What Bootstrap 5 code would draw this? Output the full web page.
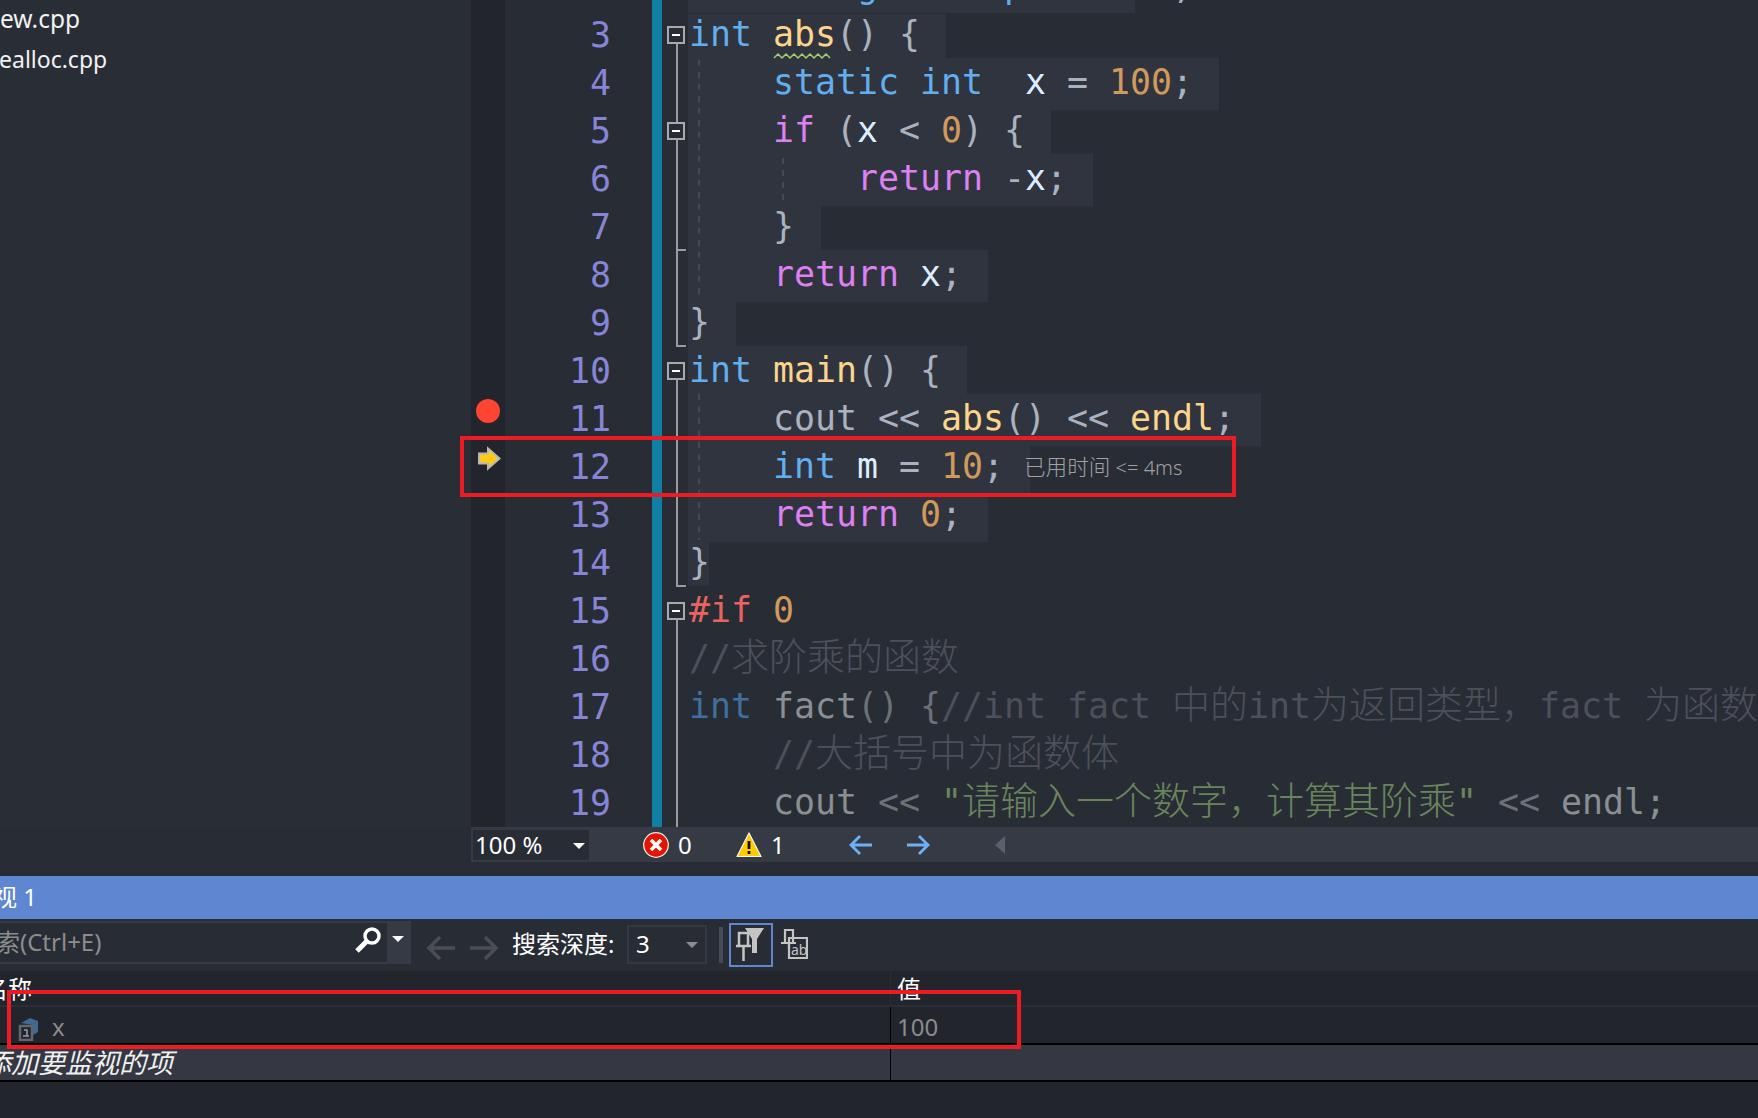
<!DOCTYPE html>
<html lang="zh">
<head>
<meta charset="utf-8">
<title>Watch</title>
<link href="https://cdn.jsdelivr.net/npm/bootstrap@5.3.0/dist/css/bootstrap.min.css" rel="stylesheet">
<style>
html,body{margin:0;height:1118px;overflow:hidden;background:#282c35;}
body{font-family:"Noto Sans","Noto Sans CJK SC",sans-serif;font-size:24px;color:#fff;}
.page-wrap{width:1758px;height:1118px;position:relative;}
.top-zone{height:827px;flex:none;}
.side-pane{width:471px;background:#292d36;line-height:41px;font-size:23px;color:#f2f2f2;}
.side-file{margin-left:-1px;margin-top:-2px;height:41px;}
.side-first{font-size:24.5px;margin-left:0;}
.editor-pane{width:1287px;min-width:0;}
.rows{margin-top:-37px;height:864px;flex:none;}
.ed-row{height:48px;flex:none;}
.gut{width:34px;background:#22252b;height:48px;flex:none;}
.num{width:147px;height:48px;flex:none;padding-right:41px;text-align:right;color:#8884d8;font:34.88px/48px "DejaVu Sans Mono",monospace;}
.chg{width:10px;height:48px;flex:none;background:#0f80a3;}
.fold-col{width:26px;height:48px;flex:none;}
.code{height:48px;padding-left:1px;white-space:pre;font:34.88px/46px "DejaVu Sans Mono","Noto Sans CJK SC",monospace;color:#dcedff;flex:none;}
.band{background:#30343e;}
.tall{margin-top:-1px;height:52px;line-height:48px;}
.short{margin-top:3px;height:44px;line-height:40px;}
.mid{margin-top:-1px;height:48px;line-height:48px;}
.b2{width:447px;height:50px;line-height:46px;}.b3{width:258px}.b4{width:531px}.b5{width:363px}.b6{width:405px}.b7{width:133px}.b8{width:300px}.b9{width:48px}.b10{width:279px}.b11{width:573px}.b12{width:342px;height:49px}.b13{width:300px;margin-top:4px;height:47px;line-height:38px}.b14{width:21px}
.zh{font:38px/1 "Noto Sans CJK SC",sans-serif;font-weight:300;}
.kw{color:#61afef}.fn{color:#fdd48b}.pk{color:#dd80f2}.nu{color:#d19a5c}.pu{color:#abb2bf}.ih{color:#e8655f}
.ckw{color:#3f6f9f}.cfn{color:#8b8e93}.cpu{color:#6c7079}.cmt{color:#4c505a}.cstr{color:#69855c}
.inlay{font:300 20px/1 "Noto Sans","Noto Sans CJK SC",sans-serif;color:#a2a2a2;margin-left:-6px;position:relative;}
.inlay-zh{font-size:21.6px}
.overlay-svg{position:absolute;left:0;top:0;pointer-events:none;}
.bp-dot{width:24px;height:24px;border-radius:50%;background:#ff4433;margin:4px 0 0 5px;}
.status-bar{height:35px;margin-left:471px;background:#353a45;font-size:24px;line-height:1;flex:none;}
.gap-strip{height:14px;flex:none;}
.zoom-box{width:116px;height:30px;margin-left:2px;background:#282c35;padding-left:2px;line-height:30px;}
.caret-d{width:0;height:0;border-left:6px solid transparent;border-right:6px solid transparent;border-top:6px solid #fff;}
.zoom-box .caret-d{margin:3px 4px 0 auto;}
.st-err{margin-left:54px}.st-n{margin-left:9px;width:12px}.st-warn{margin-left:46px}.st-a1{margin-left:66px}.st-a2{margin-left:33px}
.tri-l{margin-left:65px;width:0;height:0;border-top:9px solid transparent;border-bottom:9px solid transparent;border-right:10px solid #5a5f6b;}
.title-bar{height:43px;background:#5f86d0;line-height:42px;font-size:24px;color:#fff;white-space:pre;flex:none;}
.title-clip{margin-left:-7px;}
.tool-bar{height:52px;background:#282c35;flex:none;}
.search-wrap{width:411px;height:43px;margin-top:2px;background:#353a45;flex:none;}
.search-in{width:387px;height:39px;margin-top:2px;background:#282c35;color:#8d8d8d;line-height:37px;}
.search-txt{margin-left:-4px;}
.search-in svg{margin:3px 5px 0 auto;}
.search-wrap .caret-d{margin:15px 0 0 5px;}
.nav-a1{margin-left:15px}.nav-a2{margin-left:13px}
.depth-lbl{margin-left:13px;width:115px;line-height:50px;white-space:pre;}
.depth-box{width:80px;height:39px;margin-top:6px;border:2px solid #343843;line-height:33px;padding-left:7px;}
.depth-box .caret-d{margin:15px 7px 0 auto;border-top-color:#8d8d8d;}
.tb-sep{width:4px;height:36px;margin:8px 0 0 12px;background:#474b55;}
.tb-active{width:44px;height:44px;margin:4px 0 0 6px;border:2px solid #5f86d0;}
.tb-plain{margin:10px 0 0 7px;}
.hdr-row{height:36px;background:#22252c;line-height:36px;border-bottom:2px solid #2b2e37;flex:none;}
.name-col{width:890px;flex:none;white-space:pre;overflow:hidden;}
.val-col{flex:1;padding-left:6px;}
.hdr-clip{margin-left:-16px;}
.hdr-val{border-left:1px solid #2b2e37;}
.var-row{height:38px;background:#22252c;border-bottom:2px solid #000;line-height:40px;color:#8b8b8b;flex:none;}
.var-row svg{margin:10px 0 0 17px;}
.var-nm{margin-left:13px;}
.val-cell{border-left:1px solid #000;}
.add-row{height:37px;background:#353843;border-bottom:2px solid #000;line-height:36px;flex:none;}
.add-txt{font-style:italic;font-size:27px;margin-left:-16px;color:#f0f0f0;}
.rest-zone{flex:1;background:#22252c;}
.red-box{position:absolute;border:4px solid #ed1c24;}
.rb1{left:460px;top:436px;width:776px;height:61px;}
.rb2{left:7px;top:990px;width:1014px;height:59px;}
</style>
</head>
<body>
<div class="page-wrap d-flex flex-column overflow-hidden">
  <div class="top-zone d-flex overflow-hidden">
    <div class="side-pane flex-shrink-0 overflow-hidden">
      <div class="side-file side-first">ew.cpp</div>
      <div class="side-file mt-0">ealloc.cpp</div>
    </div>
    <div class="editor-pane">
      <div class="rows d-flex flex-column">
        <div class="ed-row d-flex"><div class="gut"></div><div class="num">2</div><div class="chg"></div><div class="fold-col"></div><div class="code band b2">    <span class="kw">using namespace</span> <span class="pu">std;</span></div></div>
        <div class="ed-row d-flex"><div class="gut"></div><div class="num">3</div><div class="chg"></div><div class="fold-col"></div><div class="code band short b3"><span class="kw">int</span> <span class="fn">abs</span><span class="pu">() {</span></div></div>
        <div class="ed-row d-flex"><div class="gut"></div><div class="num">4</div><div class="chg"></div><div class="fold-col"></div><div class="code band tall b4">    <span class="kw">static int</span>  x <span class="pu">=</span> <span class="nu">100</span><span class="pu">;</span></div></div>
        <div class="ed-row d-flex"><div class="gut"></div><div class="num">5</div><div class="chg"></div><div class="fold-col"></div><div class="code band short b5">    <span class="pk">if</span> <span class="pu">(</span>x <span class="pu">&lt;</span> <span class="nu">0</span><span class="pu">) {</span></div></div>
        <div class="ed-row d-flex"><div class="gut"></div><div class="num">6</div><div class="chg"></div><div class="fold-col"></div><div class="code band tall b6">        <span class="pk">return</span> <span class="pu">-</span>x<span class="pu">;</span></div></div>
        <div class="ed-row d-flex"><div class="gut"></div><div class="num">7</div><div class="chg"></div><div class="fold-col"></div><div class="code band short b7">    <span class="pu">}</span></div></div>
        <div class="ed-row d-flex"><div class="gut"></div><div class="num">8</div><div class="chg"></div><div class="fold-col"></div><div class="code band tall b8">    <span class="pk">return</span> x<span class="pu">;</span></div></div>
        <div class="ed-row d-flex"><div class="gut"></div><div class="num">9</div><div class="chg"></div><div class="fold-col"></div><div class="code band short b9"><span class="pu">}</span></div></div>
        <div class="ed-row d-flex"><div class="gut"></div><div class="num">10</div><div class="chg"></div><div class="fold-col"></div><div class="code band mid b10"><span class="kw">int</span> <span class="fn">main</span><span class="pu">() {</span></div></div>
        <div class="ed-row d-flex"><div class="gut"><div class="bp-dot"></div></div><div class="num">11</div><div class="chg"></div><div class="fold-col"></div><div class="code band tall b11">    <span class="pu">cout &lt;&lt;</span> <span class="fn">abs</span><span class="pu">() &lt;&lt;</span> <span class="fn">endl</span><span class="pu">;</span></div></div>
        <div class="ed-row d-flex"><div class="gut"><svg width="34" height="48" viewBox="0 0 34 48"><path d="M8 10.500h9V5.500l11.500 10-11.500 10v-5H8z" fill="#ffcb17" stroke="#b8b8b8" stroke-width="2"/></svg></div><div class="num">12</div><div class="chg"></div><div class="fold-col"></div><div class="code band short b12">    <span class="kw">int</span> m <span class="pu">=</span> <span class="nu">10</span><span class="pu">;</span></div><span class="inlay align-self-center"><span class="inlay-zh">已用时间</span> &lt;= 4ms</span></div>
        <div class="ed-row d-flex"><div class="gut"></div><div class="num">13</div><div class="chg"></div><div class="fold-col"></div><div class="code band b13">    <span class="pk">return</span> <span class="nu">0</span><span class="pu">;</span></div></div>
        <div class="ed-row d-flex"><div class="gut"></div><div class="num">14</div><div class="chg"></div><div class="fold-col"></div><div class="code band short b14"><span class="pu">}</span></div></div>
        <div class="ed-row d-flex"><div class="gut"></div><div class="num">15</div><div class="chg"></div><div class="fold-col"></div><div class="code"><span class="ih">#if</span> <span class="nu">0</span></div></div>
        <div class="ed-row d-flex"><div class="gut"></div><div class="num">16</div><div class="chg"></div><div class="fold-col"></div><div class="code cmt">//<span class="zh">求阶乘的函数</span></div></div>
        <div class="ed-row d-flex"><div class="gut"></div><div class="num">17</div><div class="chg"></div><div class="fold-col"></div><div class="code"><span class="ckw">int</span> <span class="cfn">fact</span><span class="cpu">() {</span><span class="cmt">//int fact <span class="zh">中的</span>int<span class="zh">为返回类型，</span>fact <span class="zh">为函数</span></span></div></div>
        <div class="ed-row d-flex"><div class="gut"></div><div class="num">18</div><div class="chg"></div><div class="fold-col"></div><div class="code cmt">    //<span class="zh">大括号中为函数体</span></div></div>
        <div class="ed-row d-flex"><div class="gut"></div><div class="num">19</div><div class="chg"></div><div class="fold-col"></div><div class="code">    <span class="cfn">cout</span> <span class="cpu">&lt;&lt;</span> <span class="cstr">"<span class="zh">请输入一个数字，计算其阶乘</span>"</span> <span class="cpu">&lt;&lt;</span> <span class="cfn">endl;</span></div></div>
      </div>
    </div>
  </div>
  <div class="status-bar d-flex align-items-center">
    <div class="zoom-box d-flex flex-shrink-0"><span>100 %</span><span class="caret-d align-self-center"></span></div>
    <svg class="st-err" width="26" height="26" viewBox="0 0 26 26"><circle cx="13" cy="13" r="12.300" fill="#e51400" stroke="#f2f2f2" stroke-width="1.200"/><path d="M8 8l10 10M18 8L8 18" stroke="#fff" stroke-width="3.600"/></svg>
    <span class="st-n">0</span>
    <svg class="st-warn" width="26" height="26" viewBox="0 0 26 26"><path d="M13 1L25 24.500H1z" fill="#ffcc00" stroke="#f5f5f5" stroke-width="1.200" stroke-linejoin="round"/><path d="M13 9v8M13 19v3" stroke="#111" stroke-width="2.800"/></svg>
    <span class="st-n">1</span>
    <svg class="st-a1" width="24" height="22" viewBox="0 0 24 22"><path d="M23 11H3M11 2l-9 9 9 9" fill="none" stroke="#6cb2f5" stroke-width="2.800"/></svg>
    <svg class="st-a2" width="24" height="22" viewBox="0 0 24 22"><path d="M1 11h20M13 2l9 9-9 9" fill="none" stroke="#6cb2f5" stroke-width="2.800"/></svg>
    <span class="tri-l"></span>
  </div>
  <div class="gap-strip"></div>
  <div class="title-bar overflow-hidden"><span class="title-clip d-inline-block">视 1</span></div>
  <div class="tool-bar d-flex">
    <div class="search-wrap d-flex">
      <div class="search-in d-flex overflow-hidden"><span class="search-txt text-nowrap">索(Ctrl+E)</span>
        <svg width="28" height="28" viewBox="0 0 28 28"><circle cx="18" cy="10" r="7" fill="none" stroke="#fff" stroke-width="3.500"/><path d="M13 15L3 25" stroke="#fff" stroke-width="5"/></svg>
      </div>
      <span class="caret-d"></span>
    </div>
    <svg class="nav-a1 mt-3" width="30" height="26" viewBox="0 0 30 26"><path d="M29 13H4M14 2L3 13l11 11" fill="none" stroke="#4a4d55" stroke-width="3.500"/></svg>
    <svg class="nav-a2 mt-3" width="30" height="26" viewBox="0 0 30 26"><path d="M1 13h25M16 2l11 11-11 11" fill="none" stroke="#4a4d55" stroke-width="3.500"/></svg>
    <span class="depth-lbl">搜索深度:</span>
    <div class="depth-box d-flex flex-shrink-0"><span>3</span><span class="caret-d"></span></div>
    <div class="tb-sep"></div>
    <div class="tb-active d-flex align-items-center justify-content-center">
      <svg width="30" height="36" viewBox="0 0 30 36"><path d="M3 6h9v13H3zM0 19h15M7.500 19v15" fill="none" stroke="#c4c4c4" stroke-width="2.500"/><path d="M9 1h19l-7 11v14h-5V12z" fill="#c4c4c4"/></svg>
    </div>
    <svg class="tb-plain" width="28" height="30" viewBox="0 0 28 30"><path d="M5 1h8v13H5zM1 14h15M9 14v6" fill="none" stroke="#c4c4c4" stroke-width="2.200"/><path d="M9 9h18v20H9z" fill="none" stroke="#c4c4c4" stroke-width="2.200"/><text x="11" y="26" font-family="Noto Sans" font-size="14" fill="#c4c4c4">ab</text></svg>
  </div>
  <div class="hdr-row d-flex"><div class="name-col"><span class="hdr-clip d-inline-block">名称</span></div><div class="val-col hdr-val">值</div></div>
  <div class="var-row d-flex"><div class="name-col d-flex">
    <svg width="22" height="24" viewBox="0 0 22 24"><path d="M4 6l9-5 8 3v11l-5 3V8z" fill="#3f6a96"/><path d="M3 9h12v14H3z" fill="#22252c" stroke="#62666e" stroke-width="2.500"/><path d="M7 13h3v6M6 19h6" fill="none" stroke="#9a9a9a" stroke-width="1.500"/></svg>
    <span class="var-nm">x</span></div><div class="val-col val-cell">100</div></div>
  <div class="add-row d-flex"><div class="name-col"><span class="add-txt d-inline-block">添加要监视的项</span></div><div class="val-col val-cell"></div></div>
  <div class="rest-zone"></div>

  <svg class="overlay-svg" width="1000" height="830" viewBox="0 0 1000 830">
    <g fill="none" stroke="#9c9c9c" stroke-width="2">
      <path d="M677 44V346h9M677 250h9M677 380V586h9M677 620V827"/>
    </g>
    <g stroke="#454952" stroke-width="2" stroke-dasharray="6 6" fill="none">
      <path d="M699 60V300M699 394V540M783 158V204"/>
    </g>
    <g fill="#282c35" stroke="#aaa" stroke-width="2">
      <rect x="668" y="27" width="16" height="16"/><rect x="668" y="123" width="16" height="16"/><rect x="668" y="363" width="16" height="16"/><rect x="668" y="603" width="16" height="16"/>
    </g>
    <path d="M672 35h8M672 131h8M672 371h8M672 611h8" stroke="#fff" stroke-width="2"/>
    <path d="M774 58l4-4 4 4 4-4 4 4 4-4 4 4 4-4 4 4 4-4 4 4 4-4 4 4 4-4 4 4" fill="none" stroke="#a6cc70" stroke-width="1.500"/>
  </svg>
  <div class="red-box rb1"></div>
  <div class="red-box rb2"></div>
</div>
<script src="https://cdn.jsdelivr.net/npm/bootstrap@5.3.0/dist/js/bootstrap.bundle.min.js"></script>
</body>
</html>
